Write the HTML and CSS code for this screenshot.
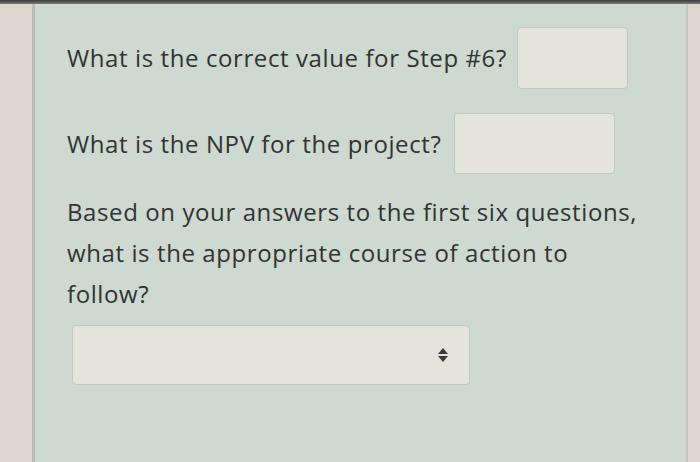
FILE: index.html
```html
<!DOCTYPE html>
<html>
<head>
<meta charset="utf-8">
<link rel="stylesheet" href="styles.css">
</head>
<body>
<div class="topbar"></div>
<div class="screen">
  <div class="side-left"></div>
  <main class="panel">
    <div class="row row-1">
      <span class="q">What is the correct value for Step #6?</span>
      <div class="input input-1"></div>
    </div>
    <div class="row row-2">
      <span class="q">What is the NPV for the project?</span>
      <div class="input input-2"></div>
    </div>
    <p class="para">Based on your answers to the first six questions,<br>what is the appropriate course of action to<br>follow?</p>
    <div class="select">
      <svg class="arrows" width="10" height="14" viewBox="0 0 10 14"><path d="M5 0 L10 6 L0 6 Z M0 8 L10 8 L5 14 Z" fill="#3a3a3a"/></svg>
    </div>
  </main>
  <div class="side-right"></div>
</div>
</body>
</html>
```
FILE: styles.css
```css
html, body {
  margin: 0;
  padding: 0;
  width: 700px;
  height: 462px;
  overflow: hidden;
  background: #dcd7cf;
  font-family: "Open Sans", "Noto Sans", sans-serif;
}
.topbar {
  height: 4px;
  background: linear-gradient(#3e3c3c, #7b7876);
}
.screen {
  display: flex;
  height: 458px;
}
.side-left {
  width: 32px;
  background: #dcd6ce;
  border-right: 3px solid #b9bdb6;
}
.side-right {
  width: 12px;
  background: #ddd7cf;
  border-left: 2px solid #c4c7c0;
}
.panel {
  flex: 1;
  background: #cdd9d1;
  padding: 23px 0 0 32px;
  color: #333333;
  font-size: 24px;
  letter-spacing: 0.6px;
}
.row {
  display: flex;
  align-items: center;
}
.q {
  line-height: 30px;
}
.input {
  background: #e4e4dc;
  border: 1px solid #c3c8c0;
  border-radius: 4px;
  box-sizing: border-box;
  height: 62px;
}
.input-1 {
  width: 111px;
  margin-left: 10px;
}
.row-2 {
  margin-top: 24px;
}
.input-2 {
  width: 161px;
  height: 61px;
  margin-left: 13px;
}
.para {
  margin: 17px 0 0 0;
  line-height: 41px;
}
.select {
  margin: 11px 0 0 5px;
  width: 398px;
  height: 60px;
  box-sizing: border-box;
  background: #e4e4dc;
  border: 1px solid #c3c8c0;
  border-radius: 4px;
  display: flex;
  align-items: center;
  justify-content: flex-end;
  padding-right: 21px;
}
.arrows {
  display: block;
}
```
